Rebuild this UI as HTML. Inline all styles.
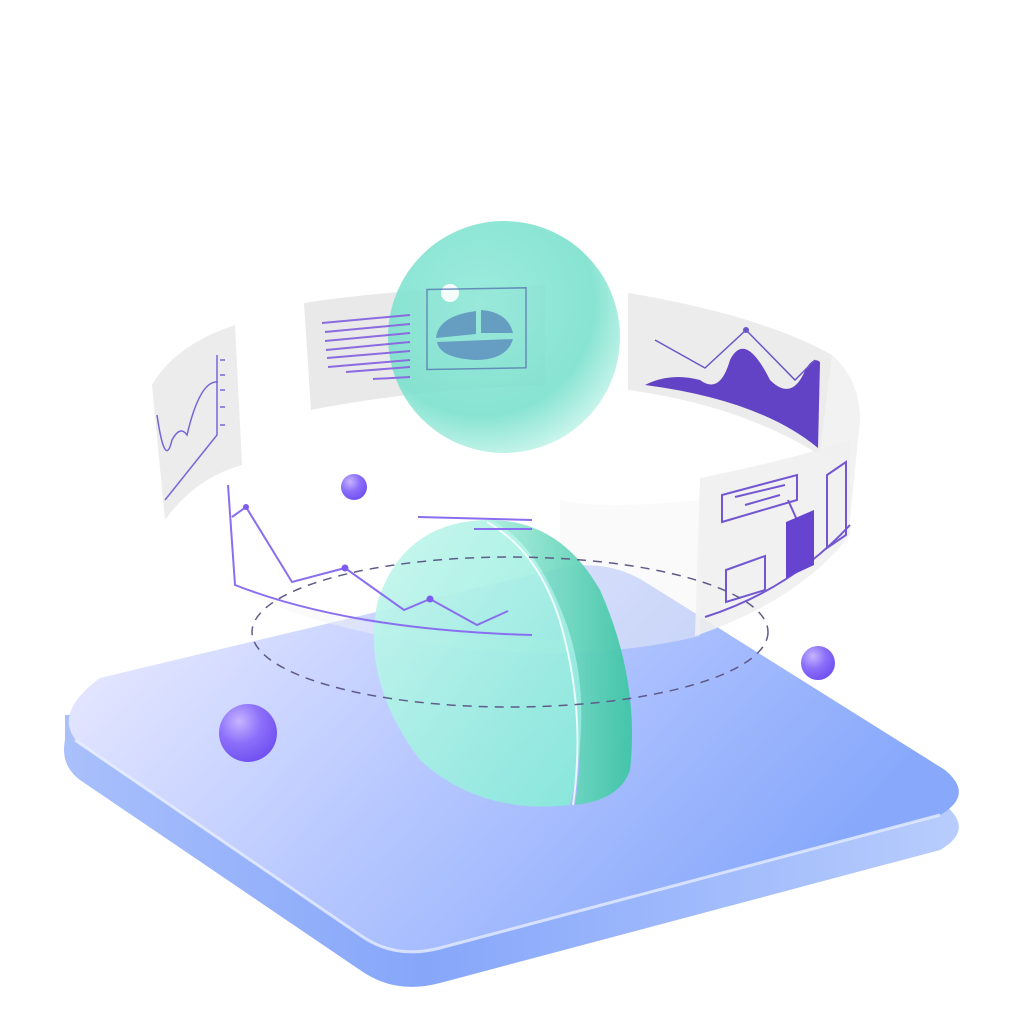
<!DOCTYPE html>
<html><head><meta charset="utf-8"><style>html,body{margin:0;padding:0;background:#fff;width:1020px;height:1020px;overflow:hidden}</style></head>
<body>
<svg width="1020" height="1020" viewBox="0 0 1020 1020" xmlns="http://www.w3.org/2000/svg">
<defs>
<linearGradient id="top" x1="0" y1="0" x2="1" y2="0.4">
<stop offset="0" stop-color="#f0eeff"/><stop offset="0.5" stop-color="#b9c9ff"/><stop offset="1" stop-color="#87a8fb"/></linearGradient>
<linearGradient id="side" x1="0" y1="0" x2="1" y2="0">
<stop offset="0" stop-color="#a9c0fb"/><stop offset="0.4" stop-color="#86a6fa"/><stop offset="1" stop-color="#b8cdfd"/></linearGradient>
<radialGradient id="sph" cx="0.4" cy="0.35" r="0.7">
<stop offset="0" stop-color="#8fe9d9"/><stop offset="0.7" stop-color="#78e0cc"/><stop offset="1" stop-color="#c9f5ec"/></radialGradient>
<linearGradient id="half" x1="0" y1="0" x2="1" y2="1">
<stop offset="0" stop-color="#c6f7ee"/><stop offset="1" stop-color="#86ead9"/></linearGradient>
<linearGradient id="halfs" x1="0" y1="0" x2="1" y2="0">
<stop offset="0" stop-color="#a6eddc"/><stop offset="1" stop-color="#3cc6a4"/></linearGradient>
<radialGradient id="ball" cx="0.35" cy="0.3" r="0.75">
<stop offset="0" stop-color="#c6b5ff"/><stop offset="0.5" stop-color="#8c70fa"/><stop offset="1" stop-color="#6f4ff0"/></radialGradient>
</defs>
<!-- platform -->
<path d="M100,713 L560,603 Q610,593 650,620 L945,805 Q975,830 940,850 L440,983 Q395,995 360,970 L80,780 Q60,765 65,740 L65,715 Z" fill="url(#side)"/>
<path d="M100,678 L560,568 Q610,558 650,585 L945,770 Q975,795 940,815 L440,948 Q395,960 360,935 L80,745 Q50,715 100,678 Z" fill="url(#top)"/>
<path d="M75,740 L360,935 Q395,960 440,948 L940,815" fill="none" stroke="#e6ecff" stroke-width="3" opacity="0.8"/>
<!-- band panels -->
<path d="M152,385 Q175,345 235,325 L242,465 Q195,478 165,520 Z" fill="#ececec"/>
<path d="M304,303 Q400,288 545,285 L545,385 Q410,390 311,410 Z" fill="#e9e9e9"/>
<path d="M628,293 Q760,315 832,355 L820,455 Q740,405 628,390 Z" fill="#ececec"/>
<path d="M832,355 Q860,380 860,420 L850,520 Q840,470 820,455 Z" fill="#f2f2f2"/>
<path d="M700,478 Q790,460 850,440 L850,535 Q800,600 695,636 Z" fill="#f0f0f0" opacity="0.9"/>
<path d="M240,590 Q330,635 480,650 Q600,660 700,636 L700,500 Q600,510 560,500 L560,640 Q400,640 240,590Z" fill="#f4f4f4" opacity="0.45"/>
<!-- left panel chart -->
<g stroke="#7a64d8" fill="none" stroke-width="1.5">
<path d="M217,355 L217,435 L165,500"/>
<path d="M157,415 Q165,470 172,440 Q180,425 187,435 Q200,380 218,382"/>
<path d="M220,360h5M220,375h5M220,390h5M220,407h5M220,425h5"/>
</g>
<!-- sphere -->
<circle cx="504" cy="337" r="116" fill="url(#sph)" opacity="0.88"/>
<!-- text lines -->
<g stroke="#8b6be0" stroke-width="2">
<path d="M322,323 L410,315M325,332 L410,324M325,341 L410,333M326,350 L410,342M327,358 L410,351M328,367 L410,360M346,372 L410,367M373,379 L410,377"/>
</g>
<circle cx="450" cy="293" r="9" fill="#fff" opacity="0.9"/>
<g opacity="0.85">
<rect x="427" y="297" width="99" height="80" fill="none" stroke="#5b7fb5" stroke-width="1.5" transform="skewY(-1)"/>
<g fill="#5e92bf">
<path d="M476,311 L476,334 L436,338 Q438,316 476,311Z"/>
<path d="M481,310 Q508,312 513,333 L481,333Z"/>
<path d="M437,342 L513,339 Q507,360 475,360 Q440,358 437,342Z"/>
</g></g>
<!-- right chart -->
<path d="M645,385 Q670,372 700,380 Q720,395 730,360 Q745,330 770,380 Q790,400 803,375 Q812,355 820,362 L818,448 Q760,400 645,385Z" fill="#6243c5"/>
<path d="M655,340 L705,368 L746,330 L795,380 L815,360" stroke="#6a55c8" stroke-width="1.5" fill="none"/>
<circle cx="746" cy="330" r="3" fill="#6a55c8"/>
<!-- right lower panel -->
<g stroke="#7357d2" stroke-width="2" fill="none">
<path d="M722,495 L797,475 L797,500 L722,522Z"/>
<path d="M735,497 L785,485M745,505 L780,495"/>
<path d="M788,500 L797,520"/>
<path d="M726,570 L765,556 L765,590 L726,602Z"/>
<path d="M827,475 L846,462 L846,535 L827,548Z"/>
<path d="M705,617 Q790,590 850,525"/>
</g>
<path d="M786,522 L814,510 L814,565 L786,578Z" fill="#6644cf"/>
<!-- half disc -->
<g opacity="0.92">
<path d="M490,520 Q560,520 600,590 Q640,680 630,770 Q620,800 575,805 Q590,710 560,620 Q530,545 490,520Z" fill="url(#halfs)"/>
<path d="M490,520 Q405,520 378,600 Q360,680 420,760 Q480,815 570,805 Q595,700 565,620 Q535,540 490,520Z" fill="url(#half)"/>
</g>
<path d="M487,522 Q545,555 565,640 Q585,720 573,805" stroke="#fff" stroke-width="2" fill="none" opacity="0.8"/>
<!-- left line chart -->
<g stroke="#8a6ef0" stroke-width="2" fill="none">
<path d="M228,485 L235,585 Q350,630 532,635"/>
<path d="M232,517 L246,507 L292,582 L345,568 L404,610 L430,599 L477,625 L508,611"/>
<path d="M418,517 L532,520M474,529 L532,529"/>
</g>
<circle cx="246" cy="507" r="3" fill="#7d5cf0"/><circle cx="345" cy="568" r="3.5" fill="#7d5cf0"/><circle cx="430" cy="599" r="3.5" fill="#7d5cf0"/>
<!-- dashed ellipse -->
<ellipse cx="510" cy="632" rx="258" ry="75" fill="none" stroke="#5f5b8a" stroke-width="1.5" stroke-dasharray="9 7"/>
<!-- balls -->
<circle cx="354" cy="487" r="13" fill="url(#ball)"/>
<circle cx="248" cy="733" r="29" fill="url(#ball)"/>
<circle cx="818" cy="663" r="17" fill="url(#ball)"/>
</svg>
</body></html>
